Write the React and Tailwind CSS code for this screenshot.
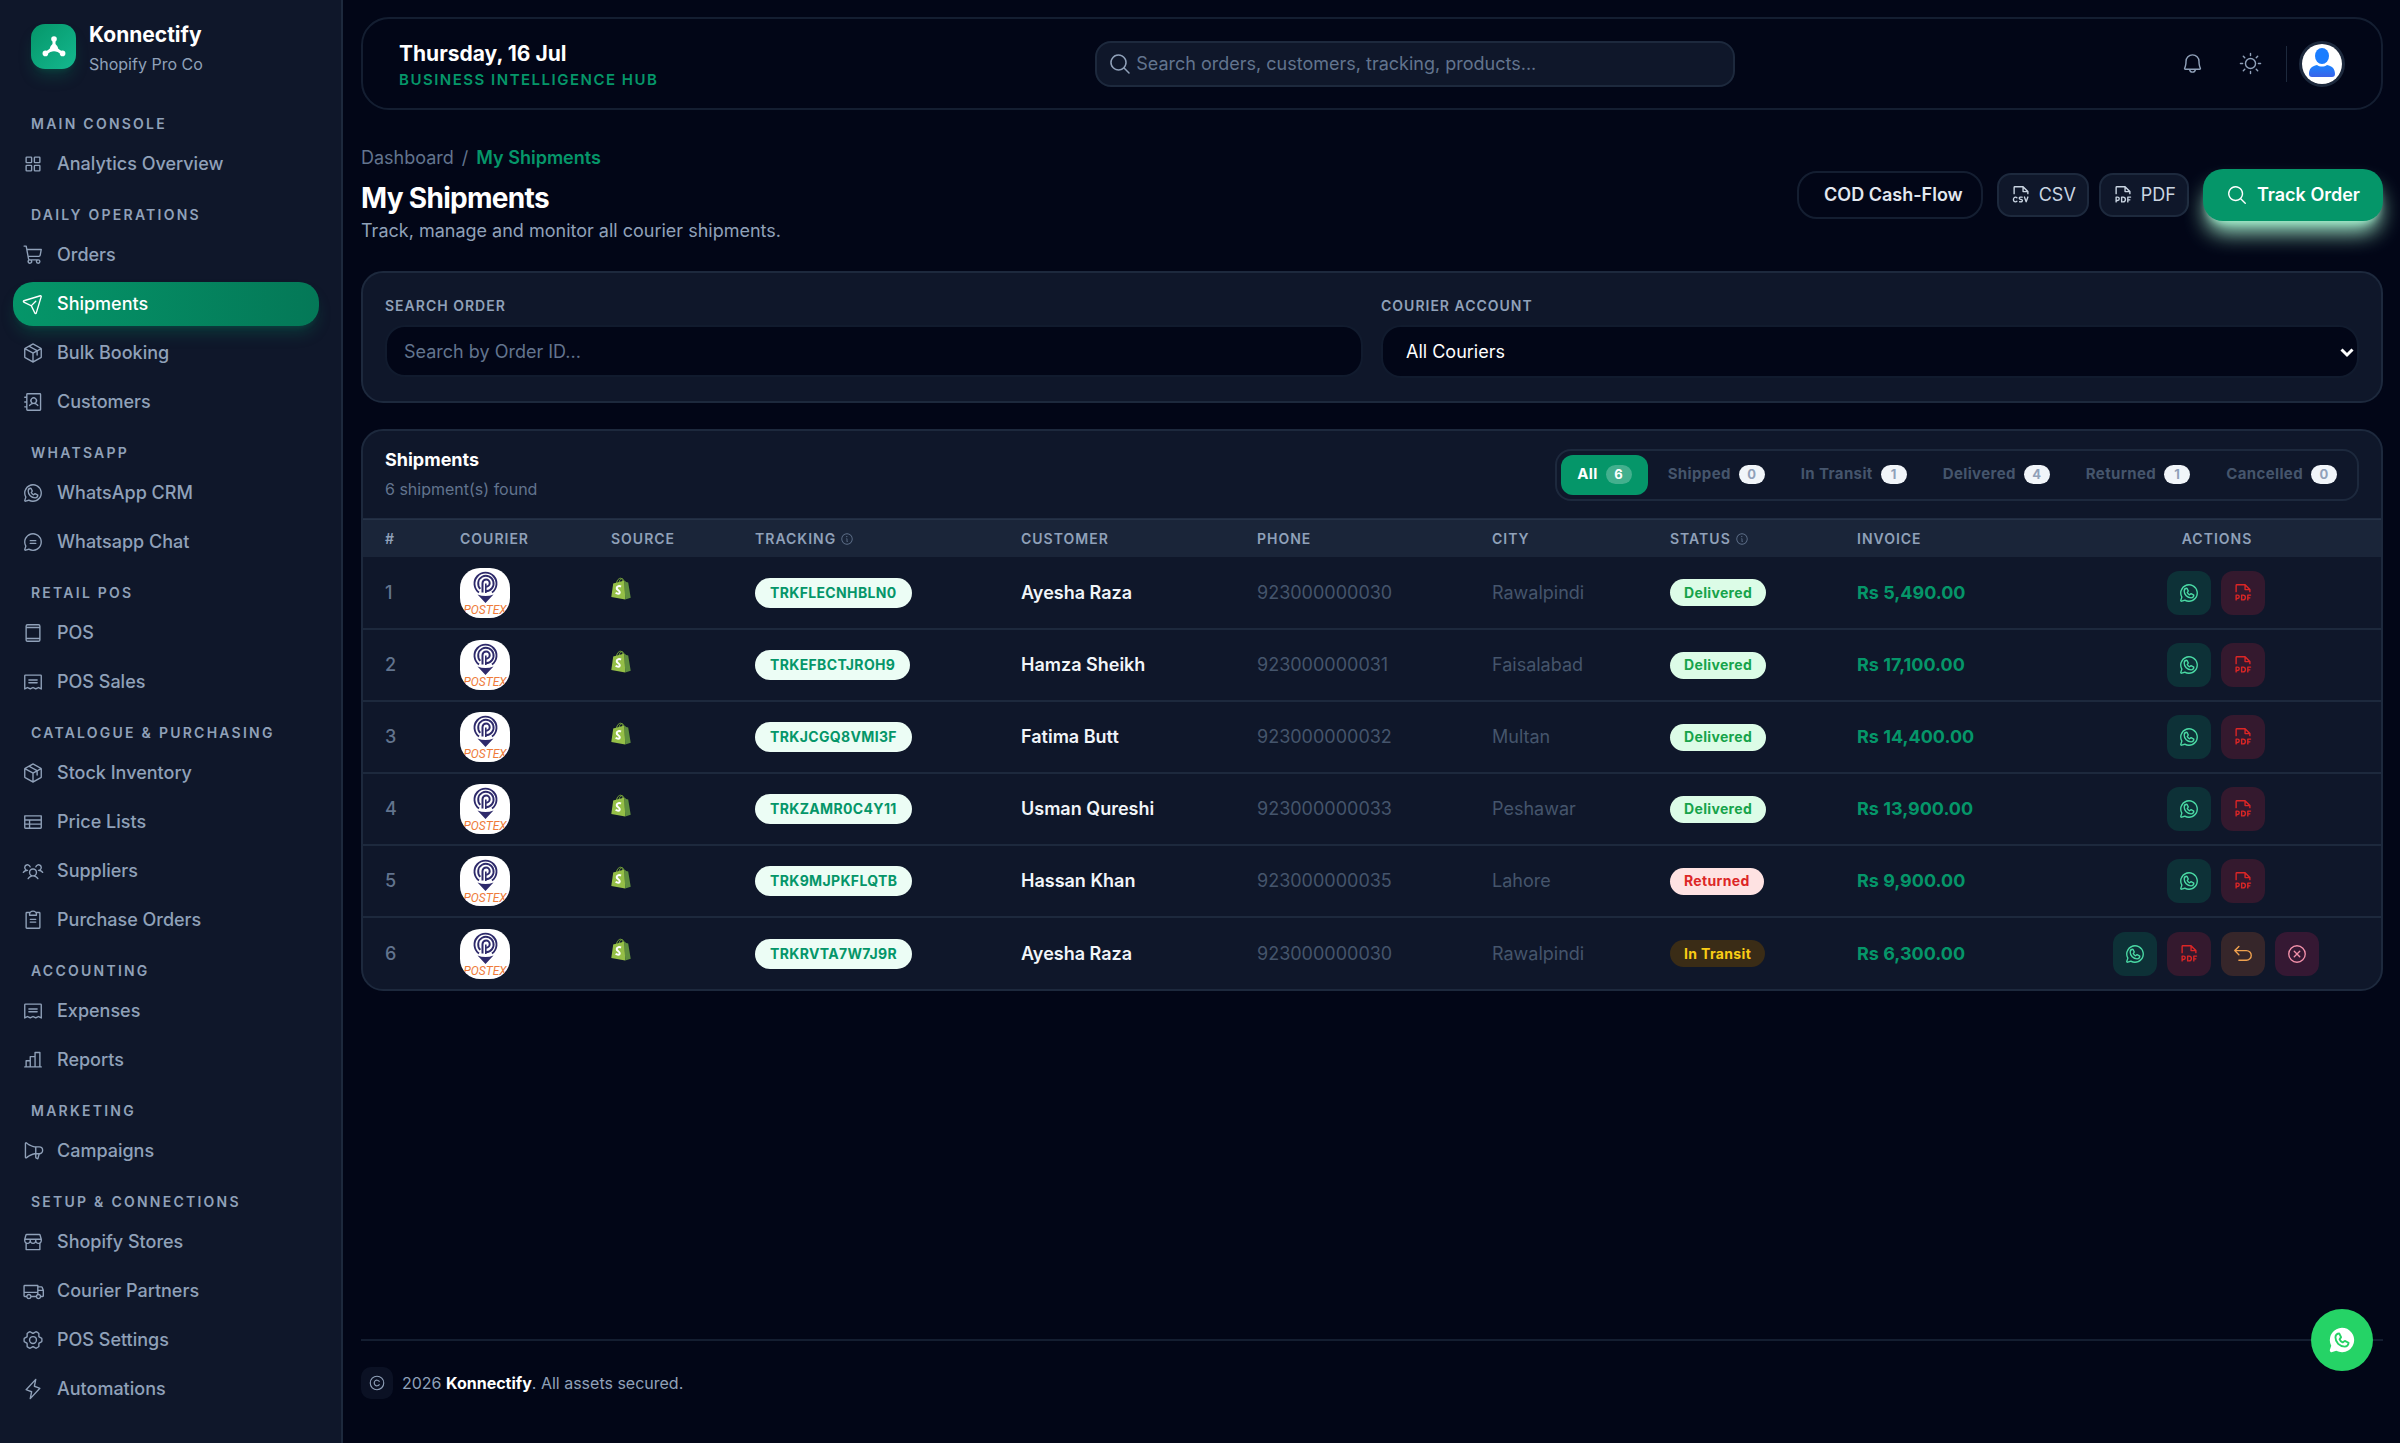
import {
  PiAddressBook,
  PiArrowUUpLeft,
  PiBell,
  PiChartBar,
  PiChatCircleText,
  PiClipboardText,
  PiCopyright,
  PiDeviceTablet,
  PiFileCsv,
  PiFilePdf,
  PiGearSix,
  PiInfo,
  PiLightning,
  PiMagnifyingGlass,
  PiMegaphone,
  PiPackage,
  PiPaperPlaneTilt,
  PiReceipt,
  PiShoppingCart,
  PiSquaresFour,
  PiStorefront,
  PiSun,
  PiTable,
  PiTruck,
  PiUsersThree,
  PiWhatsappLogo,
  PiWhatsappLogoFill,
  PiXCircle,
} from 'react-icons/pi';
import clsx from 'clsx';

const NAV = [
  { title: 'Main Console', items: [['Analytics Overview', PiSquaresFour]] },
  {
    title: 'Daily Operations',
    items: [
      ['Orders', PiShoppingCart],
      ['Shipments', PiPaperPlaneTilt],
      ['Bulk Booking', PiPackage],
      ['Customers', PiAddressBook],
    ],
  },
  {
    title: 'WhatsApp',
    items: [
      ['WhatsApp CRM', PiWhatsappLogo],
      ['Whatsapp Chat', PiChatCircleText],
    ],
  },
  {
    title: 'Retail POS',
    items: [
      ['POS', PiDeviceTablet],
      ['POS Sales', PiReceipt],
    ],
  },
  {
    title: 'Catalogue & Purchasing',
    items: [
      ['Stock Inventory', PiPackage],
      ['Price Lists', PiTable],
      ['Suppliers', PiUsersThree],
      ['Purchase Orders', PiClipboardText],
    ],
  },
  {
    title: 'Accounting',
    items: [
      ['Expenses', PiReceipt],
      ['Reports', PiChartBar],
    ],
  },
  { title: 'Marketing', items: [['Campaigns', PiMegaphone]] },
  {
    title: 'Setup & Connections',
    items: [
      ['Shopify Stores', PiStorefront],
      ['Courier Partners', PiTruck],
      ['POS Settings', PiGearSix],
      ['Automations', PiLightning],
    ],
  },
];

const TABS = [
  ['All', 6],
  ['Shipped', 0],
  ['In Transit', 1],
  ['Delivered', 4],
  ['Returned', 1],
  ['Cancelled', 0],
];

const SHIPMENTS = [
  { tracking: 'TRKFLECNHBLN0', customer: 'Ayesha Raza', phone: '923000000030', city: 'Rawalpindi', status: 'Delivered', invoice: 'Rs 5,490.00' },
  { tracking: 'TRKEFBCTJROH9', customer: 'Hamza Sheikh', phone: '923000000031', city: 'Faisalabad', status: 'Delivered', invoice: 'Rs 17,100.00' },
  { tracking: 'TRKJCGQ8VMI3F', customer: 'Fatima Butt', phone: '923000000032', city: 'Multan', status: 'Delivered', invoice: 'Rs 14,400.00' },
  { tracking: 'TRKZAMR0C4Y11', customer: 'Usman Qureshi', phone: '923000000033', city: 'Peshawar', status: 'Delivered', invoice: 'Rs 13,900.00' },
  { tracking: 'TRK9MJPKFLQTB', customer: 'Hassan Khan', phone: '923000000035', city: 'Lahore', status: 'Returned', invoice: 'Rs 9,900.00' },
  { tracking: 'TRKRVTA7W7J9R', customer: 'Ayesha Raza', phone: '923000000030', city: 'Rawalpindi', status: 'In Transit', invoice: 'Rs 6,300.00' },
];

const STATUS_STYLES = {
  Delivered: 'bg-[#dcfce7] text-[#16a34a]',
  Returned: 'bg-[#fee2e2] text-[#dc2626]',
  'In Transit': 'bg-[#3a2c16] text-[#facc15]',
};

const COLUMNS = [
  { label: '#', width: 'w-[75px]' },
  { label: 'Courier', width: 'w-[151px]' },
  { label: 'Source', width: 'w-[144px]' },
  { label: 'Tracking', width: 'w-[266px]', info: true },
  { label: 'Customer', width: 'w-[236px]' },
  { label: 'Phone', width: 'w-[235px]' },
  { label: 'City', width: 'w-[178px]' },
  { label: 'Status', width: 'w-[187px]', info: true },
  { label: 'Invoice', width: 'w-[217px]' },
  { label: 'Actions', width: 'w-[330px]', center: true },
];

function BrandMark() {
  return (
    <div className="flex size-[45px] shrink-0 items-center justify-center rounded-[14px] bg-linear-to-br from-[#059669] to-[#14b88f] shadow-lg shadow-[#059669]/25">
      <svg viewBox="0 0 24 24" className="size-6 text-white" fill="currentColor" aria-hidden="true">
        <path d="M12 4v8M12 13l-8 5M12 13l8 5" stroke="currentColor" strokeWidth="3" />
        <circle cx="12" cy="4" r="2.800" />
        <path d="M12 7.500c.8 2 3.500 2.500 3.900 5 .2 1.200.6 1.700 1.600 2.500l-2 1.800c-2.300-.9-4.700-.9-7 0l-2-1.800c1-.8 1.400-1.300 1.600-2.500.4-2.500 3.100-3 3.900-5z" />
        <circle cx="3.400" cy="18.400" r="2.800" />
        <circle cx="20.600" cy="18.400" r="2.800" />
      </svg>
    </div>
  );
}

function PostExLogo() {
  return (
    <svg viewBox="0 0 50 50" className="size-[50px] rounded-[20px] bg-white" role="img" aria-label="PostEx">
      <g fill="none" stroke="#2e2a6b">
        <path d="M19 24.500a11 11 0 1 1 13 0" strokeWidth="1.900" />
        <path d="M20.300 20.800a7.700 7.700 0 1 1 5.700 2.400" strokeWidth="1.900" />
        <path d="M22.500 24.500V15a3.600 3.600 0 1 1 3.600 3.700" strokeWidth="2" />
        <path d="M25.800 25v-9.500" strokeWidth="1.600" />
      </g>
      <path d="M17.500 26.500q8 3 16 0L25.500 35z" fill="#2e2a6b" />
      <text x="25" y="46" textAnchor="middle" fontSize="12" fontStyle="italic" fontFamily="Roboto, sans-serif" fill="#ee7b3a">
        POSTEX
      </text>
    </svg>
  );
}

function ShopifyBag() {
  return (
    <svg viewBox="0 0 20 23" className="mb-2 h-[23px] w-5" role="img" aria-label="Shopify">
      <path d="M5.500 6C6 3 8 1 9.800 1.200 11 1.300 11.600 3 11.700 5M8 5.500C8.400 3 10 1.200 11.300 1.600c1 .4 1.300 1.800 1.400 3" fill="none" stroke="#7cab3a" strokeWidth=".9" />
      <path d="M2.200 6.400 13.500 3.600 14.200 22.600.3 20z" fill="#95bf47" />
      <path d="m13.500 3.600 1.700 1.500 2 .3 2.500 15.400-5.500 1.800z" fill="#5e8e3e" />
      <path d="M10 9.600C8.400 8.600 5.900 9 5.700 11c-.2 2.300 3.300 2.200 3.100 4.400-.1 1.700-2.400 1.700-4.200.4" fill="none" stroke="#fff" strokeWidth="2" />
    </svg>
  );
}

function Avatar() {
  return (
    <svg viewBox="0 0 40 40" className="size-full" role="img" aria-label="Account">
      <defs>
        <linearGradient id="person" x1="0" y1="0" x2="0" y2="1">
          <stop offset="0" stopColor="#1a84ff" />
          <stop offset="1" stopColor="#3b63e8" />
        </linearGradient>
      </defs>
      <rect width="40" height="40" fill="#fff" />
      <ellipse cx="20" cy="12" rx="7" ry="8" fill="#1a7dff" />
      <path d="M7 30c0-5 2.500-8 8-9 3 2 7 2 10 0 5.500 1 8 4 8 9 0 2-1 3-3 3H10c-2 0-3-1-3-3z" fill="url(#person)" />
    </svg>
  );
}

function Sidebar() {
  return (
    <aside className="w-[343px] shrink-0 border-r-2 border-slate-800 bg-[#0f172a] pb-6 pl-[13px] pr-[22px]">
      <div className="flex items-start gap-[13px] pl-[18px] pt-[21px]">
        <div className="pt-[3px]">
          <BrandMark />
        </div>
        <div>
          <p className="text-[21px] font-bold leading-7 text-white">Konnectify</p>
          <p className="mt-[3px] text-base text-slate-400">Shopify Pro Co</p>
        </div>
      </div>

      <nav className="mt-[38px] space-y-[19px]">
        {NAV.map((section) => (
          <div key={section.title}>
            <h2 className="mb-2 pl-[18px] text-sm font-semibold uppercase tracking-[0.16em] text-slate-400">
              {section.title}
            </h2>
            <ul className="space-y-[5px]">
              {section.items.map(([label, Icon]) => (
                <li key={label}>
                  <a
                    href="#"
                    className={clsx(
                      'flex h-11 items-center gap-[13px] rounded-[20px] pl-[9px] text-lg font-medium',
                      label === 'Shipments'
                        ? 'bg-linear-to-r from-[#059669] to-[#047857] text-white shadow-lg shadow-[#059669]/25'
                        : 'text-slate-400'
                    )}
                  >
                    <Icon className="size-[22px]" />
                    {label}
                  </a>
                </li>
              ))}
            </ul>
          </div>
        ))}
      </nav>
    </aside>
  );
}

function TopBar() {
  return (
    <header className="flex h-[93px] items-center justify-between rounded-[28px] border-2 border-slate-800/70 px-9">
      <div className="pt-1">
        <p className="text-[21px] font-bold leading-6 text-white">Thursday, 16 Jul</p>
        <p className="mt-1 text-[15px] font-semibold uppercase leading-5 tracking-widest text-[#059669]">
          Business Intelligence Hub
        </p>
      </div>

      <label className="flex h-[46px] w-[640px] items-center gap-1 rounded-2xl border-2 border-slate-800 bg-[#0f172a] px-[11px]">
        <PiMagnifyingGlass className="size-6 shrink-0 text-slate-400" />
        <input
          type="search"
          aria-label="Search"
          placeholder="Search orders, customers, tracking, products..."
          className="w-full bg-transparent text-lg text-white outline-none placeholder:text-slate-500"
        />
      </label>

      <div className="flex items-center">
        <button type="button" aria-label="Notifications" className="flex size-10 items-center justify-center text-slate-400">
          <PiBell className="size-[23px]" />
        </button>
        <button type="button" aria-label="Toggle theme" className="ml-[18px] flex size-10 items-center justify-center text-slate-400">
          <PiSun className="size-[23px]" />
        </button>
        <span className="mx-3 ml-4 h-9 w-px bg-slate-800" />
        <button type="button" aria-label="Account" className="size-[46px] overflow-hidden rounded-full border-[3px] border-slate-800">
          <Avatar />
        </button>
      </div>
    </header>
  );
}

function PageHeading() {
  return (
    <div className="mt-9 flex items-center justify-between">
      <div>
        <nav className="flex gap-2 text-lg leading-6 text-slate-500">
          <a href="#">Dashboard</a>
          <span>/</span>
          <span className="font-semibold text-[#059669]">My Shipments</span>
        </nav>
        <h1 className="mt-[10px] text-[28px] font-bold leading-9 tracking-tight text-white">My Shipments</h1>
        <p className="mt-[2px] text-lg leading-[26px] text-slate-400">Track, manage and monitor all courier shipments.</p>
      </div>

      <div className="flex items-center">
        <button type="button" className="h-12 rounded-[20px] border-2 border-slate-800/70 pl-[25px] pr-[18px] text-lg font-semibold text-slate-200">
          COD Cash-Flow
        </button>
        <button type="button" className="ml-[14px] flex h-11 items-center gap-[7px] rounded-[14px] border-2 border-slate-800 bg-[#0f172a] px-[11px] text-lg text-slate-300">
          <PiFileCsv className="size-[22px]" />
          CSV
        </button>
        <button type="button" className="ml-[10px] flex h-11 items-center gap-[7px] rounded-[14px] border-2 border-slate-800 bg-[#0f172a] px-[11px] text-lg text-slate-300">
          <PiFilePdf className="size-[22px]" />
          PDF
        </button>
        <button
          type="button"
          className="ml-[14px] flex h-[52px] items-center gap-[9px] rounded-[20px] bg-[#059669] px-[23px] text-lg font-semibold text-white shadow-[0_15px_22px_-4px_#a7f3d0,0_6px_9px_-6px_#a7f3d0]"
        >
          <PiMagnifyingGlass className="size-[22px]" />
          Track Order
        </button>
      </div>
    </div>
  );
}

function Filters() {
  return (
    <section className="mt-[27px] grid grid-cols-2 gap-[18px] rounded-[22px] border-2 border-slate-800 bg-[#0f172a] px-[22px] py-[23px]">
      <div>
        <label htmlFor="order" className="block text-sm font-semibold uppercase tracking-[1px] text-slate-400">
          Search Order
        </label>
        <input
          id="order"
          type="text"
          placeholder="Search by Order ID..."
          className="mt-[9px] h-[52px] w-full rounded-[20px] border-2 border-slate-800/60 bg-[#020617] px-[17px] text-lg text-white outline-none placeholder:text-slate-500"
        />
      </div>
      <div>
        <label htmlFor="courier" className="block text-sm font-semibold uppercase tracking-[1px] text-slate-400">
          Courier Account
        </label>
        <div className="relative mt-[9px]">
          <select
            id="courier"
            className="h-[53px] w-full appearance-none rounded-[20px] border-2 border-slate-800/60 bg-[#020617] px-[23px] text-lg text-white outline-none"
          >
            <option>All Couriers</option>
          </select>
          <svg
            viewBox="0 0 14 10"
            className="pointer-events-none absolute right-[5px] top-[23px] h-[10px] w-[14px] text-white"
            fill="none"
            stroke="currentColor"
            strokeWidth="3"
            aria-hidden="true"
          >
            <path d="m1.500 1.500 5.500 5.500 5.500-5.500" />
          </svg>
        </div>
      </div>
    </section>
  );
}

function StatusTabs() {
  return (
    <div className="flex gap-1 rounded-2xl border-2 border-slate-800 p-1">
      {TABS.map(([label, count]) => {
        const active = label === 'All';
        return (
          <button
            key={label}
            type="button"
            className={clsx(
              'flex h-10 items-center gap-2 rounded-xl px-4 text-[15px] font-bold tracking-wide',
              active ? 'bg-[#059669] text-white' : 'text-slate-600'
            )}
          >
            {label}
            <span
              className={clsx(
                'flex h-[19px] w-[26px] items-center justify-center rounded-full text-[13px]',
                active ? 'bg-white/25 text-white' : 'bg-slate-100 text-slate-400'
              )}
            >
              {count}
            </span>
          </button>
        );
      })}
    </div>
  );
}

function ActionButton({ label, tone, icon: Icon }) {
  return (
    <button type="button" aria-label={label} className={clsx('flex size-11 items-center justify-center rounded-xl', tone)}>
      <Icon className="size-[22px]" />
    </button>
  );
}

function ShipmentRow({ index, shipment }) {
  return (
    <tr className="h-[72px] border-slate-800 not-last:border-b-2">
      <td className="pl-[22px] text-lg font-medium text-slate-500">{index}</td>
      <td className="pl-[22px]">
        <PostExLogo />
      </td>
      <td className="pl-[22px]">
        <ShopifyBag />
      </td>
      <td className="pl-[22px]">
        <span className="inline-flex h-[30px] items-center rounded-full bg-[#ecfdf5] px-[15px] align-middle text-sm font-bold tracking-wide text-[#059669]">
          {shipment.tracking}
        </span>
      </td>
      <td className="pl-[22px] text-lg font-semibold text-slate-100">{shipment.customer}</td>
      <td className="pl-[22px] text-lg text-slate-600">{shipment.phone}</td>
      <td className="pl-[22px] text-lg text-slate-600">{shipment.city}</td>
      <td className="pl-[22px]">
        <span
          className={clsx(
            'inline-flex h-[27px] items-center rounded-full px-[14px] align-middle text-sm font-bold tracking-wide',
            STATUS_STYLES[shipment.status]
          )}
        >
          {shipment.status}
        </span>
      </td>
      <td className="pl-[22px] text-lg font-bold text-[#059669]">{shipment.invoice}</td>
      <td>
        <div className="flex justify-center gap-[10px] pr-[2px]">
          <ActionButton label="Message on WhatsApp" icon={PiWhatsappLogo} tone="bg-[#0d3137] text-[#4ad9a4]" />
          <ActionButton label="Download PDF" icon={PiFilePdf} tone="bg-[#34192e] text-[#dc2626]" />
          {shipment.status === 'In Transit' && (
            <>
              <ActionButton label="Return shipment" icon={PiArrowUUpLeft} tone="bg-[#36262a] text-[#f0a24f]" />
              <ActionButton label="Cancel shipment" icon={PiXCircle} tone="bg-[#351833] text-[#f08fa8]" />
            </>
          )}
        </div>
      </td>
    </tr>
  );
}

function ShipmentsTable() {
  return (
    <section className="mt-[26px] overflow-hidden rounded-[22px] border-2 border-slate-800 bg-[#0f172a]">
      <div className="flex items-center justify-between px-[22px] py-[17px]">
        <div>
          <h2 className="text-lg font-bold leading-6 text-white">Shipments</h2>
          <p className="mt-[5px] text-base leading-6 text-slate-500">6 shipment(s) found</p>
        </div>
        <StatusTabs />
      </div>

      <table className="w-full table-fixed text-left">
        <thead>
          <tr className="h-[38px] border-t-2 border-slate-700/50 bg-slate-800/80">
            {COLUMNS.map((column) => (
              <th
                key={column.label}
                className={clsx(
                  'text-sm font-semibold uppercase tracking-[1px] text-slate-400',
                  column.width,
                  column.center ? 'text-center' : 'pl-[22px]'
                )}
              >
                <span className="inline-flex items-center gap-1">
                  {column.label}
                  {column.info && <PiInfo className="size-[14px] text-slate-500" />}
                </span>
              </th>
            ))}
          </tr>
        </thead>
        <tbody>
          {SHIPMENTS.map((shipment, i) => (
            <ShipmentRow key={shipment.tracking} index={i + 1} shipment={shipment} />
          ))}
        </tbody>
      </table>
    </section>
  );
}

export default function App() {
  return (
    <div className="flex min-h-screen bg-[#020617] font-['Inter',sans-serif]">
      <Sidebar />

      <div className="flex min-w-0 flex-1 flex-col pb-11 pl-[18px] pr-[17px] pt-[17px]">
        <TopBar />
        <main>
          <PageHeading />
          <Filters />
          <ShipmentsTable />
        </main>

        <footer className="mt-auto flex items-center gap-[9px] border-t-2 border-slate-800/70 pt-[26px] text-base text-slate-400">
          <span className="flex size-8 items-center justify-center rounded-[10px] bg-slate-900/70">
            <PiCopyright className="size-[18px]" />
          </span>
          <p>
            2026 <strong className="font-bold text-white">Konnectify</strong>. All assets secured.
          </p>
        </footer>
      </div>

      <a
        href="#"
        aria-label="Chat on WhatsApp"
        className="fixed bottom-[72px] right-[27px] flex size-[62px] items-center justify-center rounded-full bg-[#25d366] text-white"
      >
        <PiWhatsappLogoFill className="size-[30px]" />
      </a>
    </div>
  );
}
